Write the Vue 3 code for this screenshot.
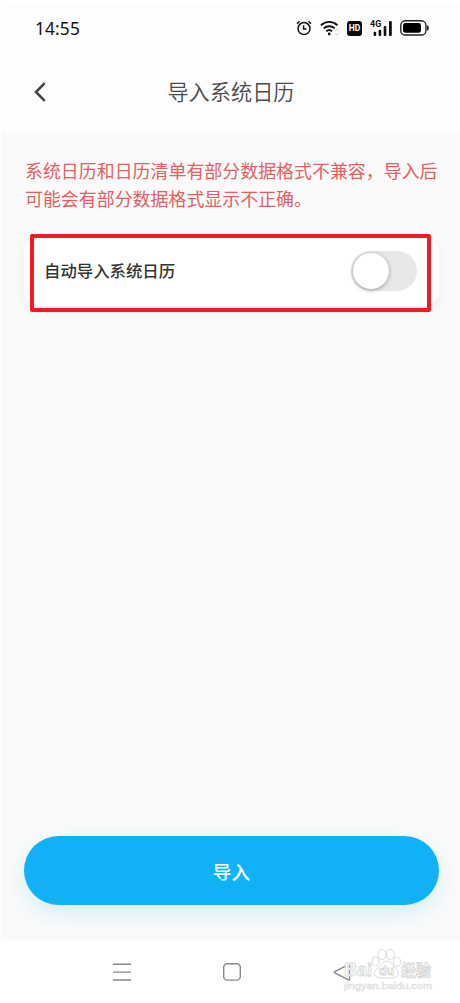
<template>
  <div class="screen">
    <header class="top">
      <div class="status-bar">
        <span class="clock">14:55</span>
        <div class="status-icons">
          <svg class="icon-alarm" width="16" height="16" viewBox="0 0 16 16" fill="none" stroke="#111" stroke-width="1.5">
            <circle cx="8" cy="8.6" r="6" />
            <path d="M7.6 5.3v3.8h3M1 3.6l2.6-2.3M15 3.6l-2.6-2.3" />
          </svg>
          <svg class="icon-wifi" width="20" height="16" viewBox="0 0 20 16" fill="none" stroke="#111" stroke-width="1.9">
            <path d="M1 5.2a11.8 11.8 0 0 1 16.4 0M3.7 8.400a8 8 0 0 1 11 0M6.300 11.400a4.300 4.300 0 0 1 5.800 0" />
            <circle cx="9.200" cy="14" r="1.400" fill="#111" stroke="none" />
            <path d="M15 11.200l1.900-2 1.900 2M15 13.200l1.900 2 1.900-2" stroke="#ccc" stroke-width="1" />
          </svg>
          <span class="hd">HD</span>
          <div class="signal">
            <span class="network">4G</span>
            <svg width="19" height="15" viewBox="0 0 19 15" fill="#111">
              <rect x="0.6" y="10.8" width="2.6" height="4.2" rx="1" />
              <rect x="5.6" y="8.8" width="2.6" height="6.2" rx="1" />
              <rect x="10.7" y="5" width="2.6" height="10" rx="1" />
              <rect x="16" y="0" width="2.8" height="15" rx="1" />
            </svg>
          </div>
          <svg class="icon-battery" width="29" height="16" viewBox="0 0 29 16">
            <rect x="0.8" y="0.8" width="25.2" height="14.2" rx="4.6" fill="none" stroke="#222" stroke-width="1.4" />
            <rect x="3" y="3" width="18" height="9.8" rx="2.4" fill="#000" />
            <path d="M27 5.2q1.8 0 1.8 2.7T27 10.6z" fill="#222" />
          </svg>
        </div>
      </div>
      <div class="nav-bar">
        <button class="back" aria-label="返回">
          <svg width="12" height="20" viewBox="0 0 12 20" fill="none" stroke="#444" stroke-width="2.6">
            <path d="M10.7 1.2L2 10l8.7 8.8" />
          </svg>
        </button>
        <h1 class="title">导入系统日历</h1>
      </div>
    </header>

    <main class="content">
      <p class="warning">系统日历和日历清单有部分数据格式不兼容，导入后<br />可能会有部分数据格式显示不正确。</p>
      <div class="card">
        <span class="label">自动导入系统日历</span>
        <button
          class="switch"
          :class="{ 'is-on': autoImport }"
          role="switch"
          :aria-checked="autoImport"
          @click="autoImport = !autoImport"
        >
          <span class="knob"></span>
        </button>
        <div class="highlight"></div>
      </div>
      <button class="submit">导入</button>
    </main>

    <footer class="system-nav">
      <svg width="20" height="20" viewBox="0 0 20 20" stroke="#888" stroke-width="1.4">
        <path d="M1 2.2h18M1 10.1h18M1 18h18" />
      </svg>
      <svg width="20" height="20" viewBox="0 0 20 20" fill="none" stroke="#888" stroke-width="1.4">
        <rect x="1.7" y="1.7" width="16.6" height="16.4" rx="3.6" />
      </svg>
      <svg width="20" height="20" viewBox="0 0 20 20" fill="none" stroke="#888" stroke-width="1.3" stroke-linejoin="round">
        <path d="M17.6 2.8v14.6q0 1-1 .5L2.6 10.8q-1-.6 0-1.2l14-7q1-.4 1 .2z" />
      </svg>
      <div class="watermark">
        <svg width="92" height="46" viewBox="0 0 92 46">
          <g fill="#fff" stroke="#dadada" stroke-width="1">
            <ellipse cx="34.6" cy="14.4" rx="3.5" ry="4.6" />
            <ellipse cx="41" cy="7.4" rx="4" ry="5.2" />
            <ellipse cx="49.4" cy="7.4" rx="4" ry="5.2" />
            <ellipse cx="56" cy="14.8" rx="3.5" ry="4.6" />
            <path d="M45.5 14c4 0 5.5 3.5 8 6s4.3 4 3.6 7.3c-.8 3.7-5.3 3.7-11.6 3.7s-12 0-12.2-4.4c-.2-3.5 3.2-4.5 5.2-7s3.500-5.600 7-5.600z" />
          </g>
          <g class="brand">
            <text x="3" y="29" font-size="19" textLength="28" lengthAdjust="spacingAndGlyphs">Bai</text>
            <text x="38" y="28" font-size="13" textLength="15" lengthAdjust="spacingAndGlyphs">du</text>
            <text x="60" y="28.5" font-size="15.5" textLength="30" lengthAdjust="spacingAndGlyphs">经验</text>
            <text x="3" y="42" font-size="9.5" class="site" textLength="88" lengthAdjust="spacingAndGlyphs">jingyan.baidu.com</text>
          </g>
        </svg>
      </div>
    </footer>
  </div>
</template>

<script setup>
import { ref } from 'vue';

const autoImport = ref(false);
</script>

<style>
body {
  margin: 0;
  background: #fff;
}
</style>

<style scoped>
.screen {
  display: flex;
  flex-direction: column;
  box-sizing: border-box;
  height: 1003px;
  padding: 5px 0 0 1px;
  background: #fff;
  font-family: "Noto Sans CJK SC", sans-serif;
  overflow: hidden;
}
button {
  border: 0;
  padding: 0;
  font-family: inherit;
  cursor: pointer;
}
.top {
  height: 126px;
  background: #fdfdfd;
}
.status-bar {
  display: flex;
  align-items: center;
  justify-content: space-between;
  height: 46px;
  padding: 0 31px 0 34px;
}
.clock {
  font-family: "Noto Sans", sans-serif;
  font-size: 17.3px;
  letter-spacing: 0.15px;
  color: #111;
}
.status-icons {
  display: flex;
  align-items: center;
}
.icon-wifi {
  margin-left: 8px;
}
.hd {
  width: 15px;
  height: 15px;
  margin-left: 7px;
  border-radius: 3px;
  background: #0a0a0a;
  color: #fff;
  font: bold 8.5px/15px Roboto, sans-serif;
  text-align: center;
}
.signal {
  position: relative;
  display: flex;
  justify-content: flex-end;
  width: 22px;
  margin-left: 8px;
}
.network {
  position: absolute;
  left: 0;
  top: -1px;
  color: #111;
  font: bold 9px/9px Roboto, sans-serif;
}
.icon-battery {
  margin-left: 8px;
}
.nav-bar {
  position: relative;
  display: flex;
  align-items: center;
  justify-content: center;
  height: 80px;
}
.back {
  position: absolute;
  left: 33px;
  top: 31px;
  display: flex;
  background: none;
}
.title {
  margin: 0;
  padding: 0 0 1px 1px;
  color: #4a4a4a;
  font-size: 21.2px;
  font-weight: 350;
  line-height: 30px;
}
.content {
  display: flex;
  flex: 1;
  flex-direction: column;
  padding: 25px 21px 35px 23px;
  background: #fafafa;
}
.warning {
  margin: 0;
  padding-left: 1px;
  color: #e3605f;
  font-size: 17.95px;
  font-weight: 400;
  line-height: 28px;
  white-space: nowrap;
}
.card {
  position: relative;
  display: flex;
  align-items: center;
  justify-content: space-between;
  height: 70px;
  margin-top: 24px;
  padding: 0 22px 0 20px;
  border-radius: 16px;
  background: #fff;
  box-shadow: 0 4px 16px rgba(0, 0, 0, 0.05);
}
.label {
  padding-bottom: 2px;
  color: #333;
  font-size: 16.4px;
  font-weight: 500;
}
.switch {
  width: 66px;
  height: 40px;
  padding: 2px;
  border-radius: 20px;
  background: #e8e8e8;
}
.switch.is-on {
  background: #10b2f5;
}
.knob {
  display: block;
  width: 36px;
  height: 36px;
  border-radius: 50%;
  background: #fff;
  box-shadow: 0 1px 4px rgba(0, 0, 0, 0.35);
}
.is-on .knob {
  margin-left: auto;
}
.highlight {
  position: absolute;
  left: 6px;
  top: -2px;
  right: 8px;
  bottom: -6px;
  border: 4px solid #ed1c24;
  border-radius: 2px;
  pointer-events: none;
}
.submit {
  height: 69px;
  margin-top: auto;
  border-radius: 35px;
  background: #10b2f5;
  box-shadow: 0 8px 22px rgba(16, 178, 245, 0.16);
  color: #fff;
  font-size: 18.7px;
  font-weight: 500;
}
.system-nav {
  position: relative;
  display: flex;
  justify-content: center;
  gap: 90px;
  height: 41px;
  padding: 22px 0 0 2px;
  background: #fff;
}
.watermark {
  position: absolute;
  left: 340px;
  top: 7px;
}
.brand {
  fill: #fff;
  stroke: #d6d6d6;
  stroke-width: 0.9px;
  font-family: "Liberation Sans", "Noto Sans CJK SC", sans-serif;
  font-weight: bold;
}
.site {
  stroke: #dedede;
  stroke-width: 0.6px;
  font-weight: normal;
}
</style>
